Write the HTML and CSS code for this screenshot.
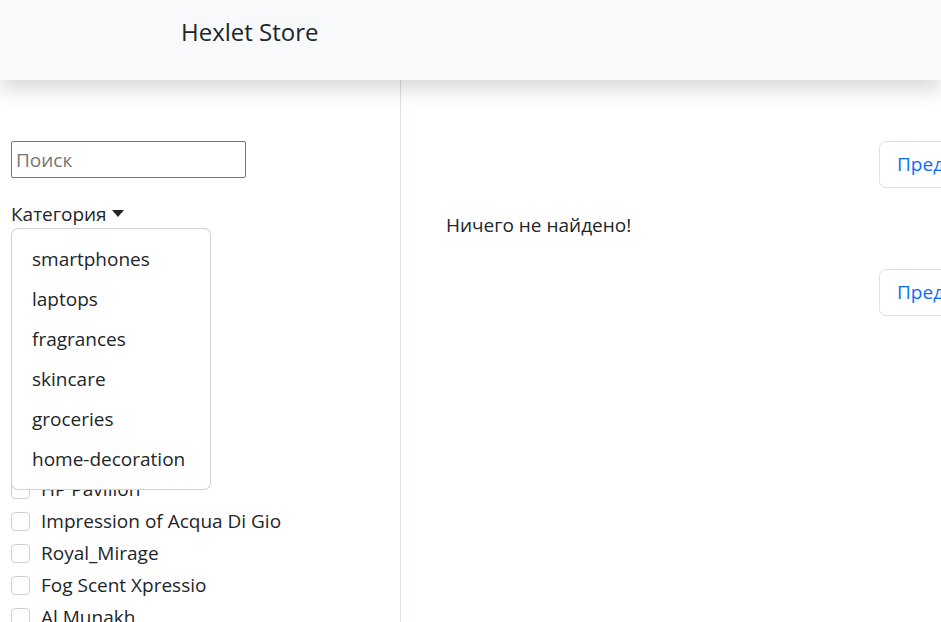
FILE: index.html
```html
<!DOCTYPE html>
<html lang="ru">
<head>
<meta charset="utf-8">
<title>Hexlet Store</title>
<link rel="stylesheet" href="styles.css">
</head>
<body>
<header class="navbar">
  <span class="brand">Hexlet Store</span>
</header>
<div class="layout">
  <aside class="sidebar">
    <input class="search" type="text" placeholder="Поиск">
    <div class="filter">
      <button class="toggle">Категория<span class="caret"></span></button>
      <ul class="menu">
        <li>smartphones</li>
        <li>laptops</li>
        <li>fragrances</li>
        <li>skincare</li>
        <li>groceries</li>
        <li>home-decoration</li>
      </ul>
    </div>
    <div class="brand-title">Бренд</div>
    <ul class="checks">
      <li><span class="box"></span>Apple</li>
      <li><span class="box"></span>Samsung</li>
      <li><span class="box"></span>OPPO</li>
      <li><span class="box"></span>Huawei</li>
      <li><span class="box"></span>Microsoft Surface</li>
      <li><span class="box"></span>Infinix</li>
      <li><span class="box"></span>HP Pavilion</li>
      <li><span class="box"></span>Impression of Acqua Di Gio</li>
      <li><span class="box"></span>Royal_Mirage</li>
      <li><span class="box"></span>Fog Scent Xpressio</li>
      <li><span class="box"></span>Al Munakh</li>
    </ul>
  </aside>
  <main class="content">
    <div class="pager"><a class="page-btn">Предыдущая</a></div>
    <p class="empty">Ничего не найдено!</p>
    <div class="pager"><a class="page-btn">Предыдущая</a></div>
  </main>
</div>
</body>
</html>
```
FILE: styles.css
```css
* { box-sizing: border-box; }
html, body { margin: 0; padding: 0; overflow: hidden; }
body {
  font-family: "Open Sans", "Noto Sans", sans-serif;
  font-size: 19px;
  color: #212529;
  background: #fff;
  height: 622px;
}
.navbar {
  position: relative;
  z-index: 2;
  height: 80px;
  background: #f8f9fa;
  box-shadow: 0 10px 19px rgba(0,0,0,.15);
  padding: 14px 0 0 181px;
}
.brand { font-size: 24px; line-height: 36px; }
.layout { display: flex; height: 542px; }
.sidebar {
  flex: none;
  width: 401px;
  border-right: 1px solid #dee2e6;
  padding: 61px 0 0 11px;
  position: relative;
}
.search {
  display: block;
  width: 235px;
  height: 37px;
  border: 1px solid #767676;
  border-radius: 2px;
  font: inherit;
  font-size: 19px;
  padding: 0 4px;
  color: #212529;
}
.search::placeholder { color: #757575; }
.filter { position: relative; margin-top: 22px; }
.toggle {
  border: 0; background: none; padding: 0; font: inherit; color: #212529;
  line-height: 29px; display: flex; align-items: center;
}
.caret {
  display: inline-block; margin-left: 5px; margin-top: -2px;
  border-top: 7px solid #212529; border-left: 6px solid transparent; border-right: 6px solid transparent;
}
.menu {
  position: absolute; z-index: 3; left: 0; top: 28px;
  width: 200px; margin: 0; padding: 10px 0;
  list-style: none; background: #fff;
  border: 1px solid rgba(0,0,0,.175); border-radius: 7px;
}
.menu li { padding: 0 20px; line-height: 40px; }
.brand-title { line-height: 29px; margin-top: 20px; }
.checks { list-style: none; margin: 3px 0 0; padding: 0; }
.checks li { display: flex; align-items: center; height: 32px; line-height: 29px; }
.box {
  width: 19px; height: 19px; border: 1px solid #cdd1d5; border-radius: 4px;
  margin-right: 11px; flex: none; background: #fff;
}
.content { flex: 1; min-width: 0; padding: 61px 0 0 45px; }
.pager { padding-left: 433px; white-space: nowrap; }
.page-btn {
  display: inline-block; height: 47px; line-height: 45px;
  padding: 0 17px; border: 1px solid #dee2e6; border-radius: 7px;
  color: #0d6efd; text-decoration: none;
}
.empty { margin: 23px 0 29px; line-height: 29px; }
```
